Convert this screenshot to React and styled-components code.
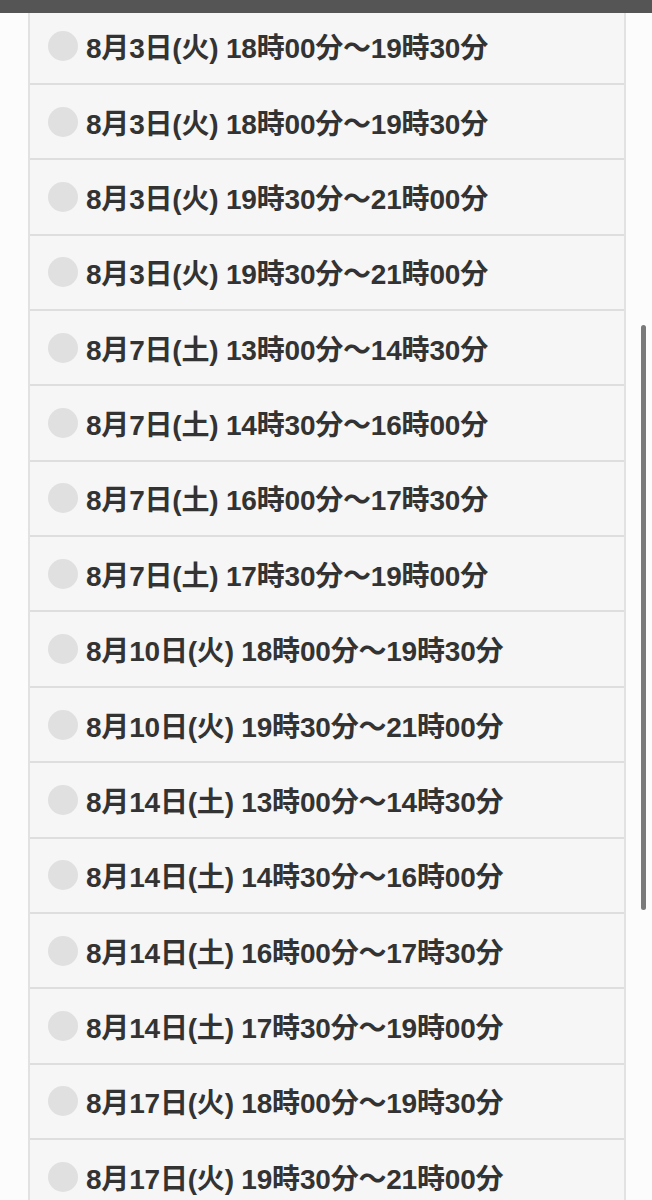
import React from 'react';
import styled, { createGlobalStyle } from 'styled-components';

const GlobalStyle = createGlobalStyle`
  html, body {
    margin: 0;
    padding: 0;
    background: #fcfcfc;
  }
  body {
    font-family: "Liberation Sans", "Noto Sans CJK JP", sans-serif;
  }
`;

const TopBar = styled.div`
  position: fixed;
  top: 0;
  left: 0;
  right: 0;
  height: 13px;
  background: #555555;
  z-index: 10;
`;

const ScrollThumb = styled.div`
  position: fixed;
  top: 325px;
  left: 641px;
  width: 5px;
  height: 585px;
  border-radius: 3px;
  background: #7a7a7a;
  z-index: 10;
`;

const Page = styled.div`
  padding-top: 9.6px;
  padding-left: 28px;
  width: 598px;
`;

const List = styled.ul`
  list-style: none;
  margin: 0;
  padding: 0;
  border-left: 2px solid #e2e2e2;
  border-right: 2px solid #e2e2e2;
  background: #f6f6f6;
`;

const Row = styled.li`
  box-sizing: border-box;
  height: 75.36px;
  display: flex;
  align-items: center;
  gap: 8px;
  padding-left: 18px;
  border-bottom: 2px solid #dedede;
`;

const Dot = styled.span`
  flex: none;
  width: 30px;
  height: 30px;
  border-radius: 50%;
  background: #e0e0e0;
`;

const Label = styled.span`
  font-family: "Liberation Sans", "Noto Sans CJK JP", sans-serif;
  font-weight: 700;
  font-size: 28px;
  color: #333333;
  white-space: nowrap;
  letter-spacing: -0.2px;
`;

const slots = [
  '8月3日(火) 18時00分〜19時30分',
  '8月3日(火) 18時00分〜19時30分',
  '8月3日(火) 19時30分〜21時00分',
  '8月3日(火) 19時30分〜21時00分',
  '8月7日(土) 13時00分〜14時30分',
  '8月7日(土) 14時30分〜16時00分',
  '8月7日(土) 16時00分〜17時30分',
  '8月7日(土) 17時30分〜19時00分',
  '8月10日(火) 18時00分〜19時30分',
  '8月10日(火) 19時30分〜21時00分',
  '8月14日(土) 13時00分〜14時30分',
  '8月14日(土) 14時30分〜16時00分',
  '8月14日(土) 16時00分〜17時30分',
  '8月14日(土) 17時30分〜19時00分',
  '8月17日(火) 18時00分〜19時30分',
  '8月17日(火) 19時30分〜21時00分',
];

export default function App() {
  return (
    <>
      <GlobalStyle />
      <TopBar />
      <Page>
        <List>
          {slots.map((s, i) => (
            <Row key={i}>
              <Dot />
              <Label>{s}</Label>
            </Row>
          ))}
        </List>
      </Page>
      <ScrollThumb />
    </>
  );
}
